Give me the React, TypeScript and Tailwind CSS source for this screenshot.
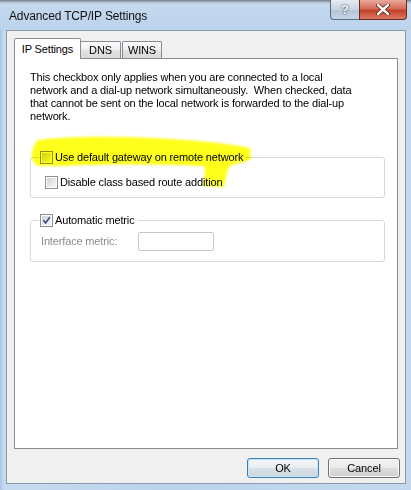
import type { ReactNode } from "react"

function CheckBox({ checked = false }: { checked?: boolean }) {
  return (
    <span className="flex h-[13px] w-[13px] shrink-0 border border-[#8e8f8f] bg-white p-px">
      <span className="flex h-full w-full items-center justify-center bg-linear-to-br from-[#cfd3d9] to-[#f8f8f8]">
        {checked && (
          <svg width="9" height="9" viewBox="0 0 9 9">
            <path d="M1.3 4.3 L3.6 6.9 L7.8 1.2" fill="none" stroke="#3a4f80" strokeWidth="1.7" />
          </svg>
        )}
      </span>
    </span>
  )
}

function Option({ checked, children }: { checked?: boolean; children: ReactNode }) {
  return (
    <span className="flex items-center gap-[2px] leading-[13px]">
      <CheckBox checked={checked} />
      <span>{children}</span>
    </span>
  )
}

function Tab({ label, active, width }: { label: string; active?: boolean; width: string }) {
  if (active) {
    return (
      <div className={`relative z-10 -mb-px flex h-[21px] items-center justify-center rounded-t-[2px] border border-b-0 border-[#898c95] bg-white ${width}`}>
        {label}
      </div>
    )
  }
  return (
    <div className={`flex h-[17px] items-center justify-center rounded-t-[2px] border border-b-0 border-[#898c95] bg-[linear-gradient(to_bottom,#fbfbfb_0%,#f1f1f1_45%,#e2e2e2_55%,#d9d9d9_100%)] ${width}`}>
      {label}
    </div>
  )
}

export default function App() {
  return (
    <div className="relative flex h-[490px] w-[411px] flex-col overflow-hidden bg-[linear-gradient(to_right,#a9c6e6_0px,#c7dbf0_4px,#bcd3ec_40%,#c4d9ef_100%)] font-['Liberation_Sans',Arial,sans-serif] text-[11px] tracking-[-0.15px] text-black">
      {/* title bar */}
      <div className="flex h-[30px] shrink-0 items-start justify-between bg-[linear-gradient(to_bottom,#6f7a86_0px,#aab8c6_2px,#c5d9ef_4px,#bcd3ec_30px)]">
        <div className="pl-[9px] pt-[9px] text-[12px] leading-[14px] text-[#111]">Advanced TCP/IP Settings</div>
        <div className="mr-[4px] flex">
          <div className="flex h-[20px] w-[29px] items-center justify-center rounded-bl-[4px] border border-t-0 border-r-0 border-[#5b6b80] bg-[linear-gradient(to_bottom,#e4ebf3_0%,#c9d5e3_50%,#b3c4d8_51%,#c6d5e6_100%)] text-[13px] font-bold leading-none text-white [text-shadow:0_0_1px_#33445a,0_0_2px_#33445a]">
            ?
          </div>
          <div className="flex h-[20px] w-[48px] items-center justify-center rounded-br-[4px] border border-t-0 border-[#6b2a22] bg-[linear-gradient(to_bottom,#e9a99b_0%,#d46c58_45%,#c2412b_55%,#d97a62_100%)]">
            <svg width="14" height="11" viewBox="0 0 14 11">
              <path d="M2 1 L12 10 M12 1 L2 10" stroke="#5a1a12" strokeWidth="4" strokeLinecap="round" />
              <path d="M2 1 L12 10 M12 1 L2 10" stroke="#ffffff" strokeWidth="2.4" strokeLinecap="round" />
            </svg>
          </div>
        </div>
      </div>

      {/* client area */}
      <div className="ml-[6px] flex h-[454px] w-[400px] flex-col border border-[#8b98a7] bg-[#f0f0f0]">
        <div className="ml-[7px] mt-[7px] flex h-[20px] items-end">
          <Tab label="IP Settings" active width="w-[67px]" />
          <div className="-ml-px">
            <Tab label="DNS" width="w-[41px]" />
          </div>
          <div className="ml-px">
            <Tab label="WINS" width="w-[40px]" />
          </div>
        </div>

        <div className="ml-[7px] h-[391px] w-[384px] border border-[#898c95] bg-white px-[15px] pt-[12px]">
          <p className="leading-[13px]">
            This checkbox only applies when you are connected to a local
            <br />
            network and a dial-up network simultaneously.&nbsp; When checked, data
            <br />
            that cannot be sent on the local network is forwarded to the dial-up
            <br />
            network.
          </p>

          <fieldset className="mt-[28px] w-[355px] rounded-[3px] border border-[#d5dbe0] pb-[8px] pl-[8px] pt-[12px]">
            <legend className="pl-px pr-[3px]">
              <Option>Use default gateway on remote network</Option>
            </legend>
            <div className="ml-[6px]">
              <Option>Disable class based route addition</Option>
            </div>
          </fieldset>

          <fieldset className="mt-[16px] w-[355px] rounded-[3px] border border-[#d5dbe0] pb-[10px] pl-[8px] pt-[5px]">
            <legend className="pl-px pr-[3px]">
              <Option checked>Automatic metric</Option>
            </legend>
            <div className="ml-[2px] flex items-center">
              <span className="w-[97px] text-[#8d8d8d]">Interface metric:</span>
              <span className="h-[19px] w-[76px] rounded-[2px] border border-[#c2c7cc] bg-white" />
            </div>
          </fieldset>
        </div>

        <div className="mt-[9px] flex justify-end gap-[9px] pr-[5px]">
          <button className="h-[20px] w-[72px] rounded-[3px] border border-[#3c7fb1] bg-[linear-gradient(to_bottom,#f4f7f9_0%,#e8edf0_50%,#d7e0e6_51%,#cdd7de_100%)] leading-none shadow-[inset_0_0_0_1px_#c8e6f7]">
            OK
          </button>
          <button className="h-[20px] w-[72px] rounded-[3px] border border-[#707070] bg-[linear-gradient(to_bottom,#f2f2f2_0%,#ebebeb_50%,#dddddd_51%,#cfcfcf_100%)] leading-none shadow-[inset_0_0_0_1px_#fcfcfc]">
            Cancel
          </button>
        </div>
      </div>

      {/* highlighter stroke */}
      <svg className="pointer-events-none absolute inset-0 mix-blend-multiply" width="411" height="490" viewBox="0 0 411 490">
        <defs>
          <filter id="soft" x="-5%" y="-20%" width="110%" height="140%">
            <feGaussianBlur stdDeviation="0.8" />
          </filter>
        </defs>
        <path
          d="M38 140 C70 136 120 136 170 139 C205 141 232 144 250 148 L251 159 C245 163 236 163 230 166 C226 172 226 180 224 187 L204 186 C204 178 206 172 204 166 C160 164 100 164 60 166 L38 166 C33 164 31 158 32 152 C33 147 35 143 38 140 Z"
          fill="#ffff1a"
          filter="url(#soft)"
        />
      </svg>
    </div>
  )
}
